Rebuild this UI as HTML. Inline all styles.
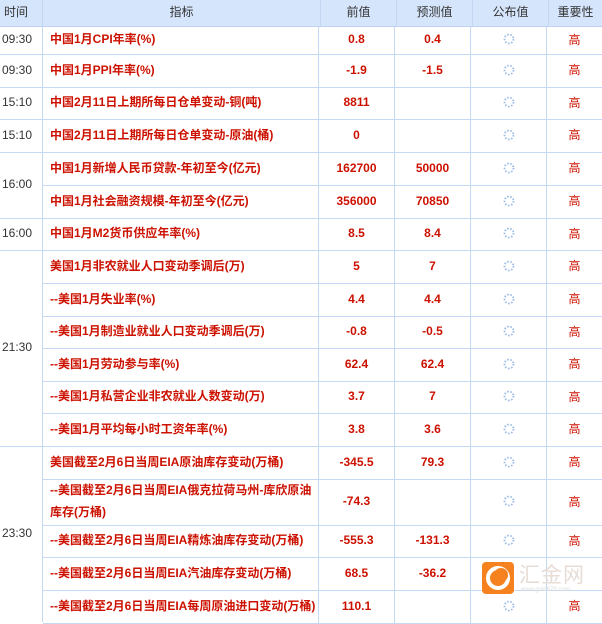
<!DOCTYPE html>
<html><head><meta charset="utf-8">
<style>
*{margin:0;padding:0;box-sizing:border-box}
body{width:602px;height:617px;overflow:hidden;background:#fff;position:relative;font-family:"Liberation Sans","Noto Sans CJK SC",sans-serif;font-size:12px}
.hd{position:absolute;top:0;left:0;width:602px;height:27px;background:#d5e5fb;border-bottom:1px solid #bcd2f0}
.hd div{position:absolute;top:0;height:27px;line-height:25px;text-align:center;color:#333;font-size:12px;border-right:1px solid #c2d6f2}
.r{position:absolute;left:43px;width:559px;border-bottom:1px solid #c5d8f4}
.r div{position:absolute;top:0;height:100%;display:flex;align-items:center;justify-content:center;color:#cc1100;font-weight:bold;border-right:1px solid #c5d8f4;padding-bottom:3px}
.r .n{left:0;width:276px;justify-content:flex-start;padding-left:7px;line-height:22px}
.r .a{left:276px;width:76px}
.r .b{left:352px;width:76px}
.r .c{left:428px;width:76px}
.r .d{left:504px;width:55px;font-weight:normal;border-right:none}
.t{position:absolute;left:0;width:43px;border-bottom:1px solid #c5d8f4;border-right:1px solid #c5d8f4;display:flex;align-items:center;padding-left:2px;color:#333;font-size:12px;padding-bottom:3px}
.sp{width:12px;height:12px}
</style></head><body>
<div class="hd">
<div style="left:0;width:43px;text-align:left;padding-left:4px">时间</div>
<div style="left:43px;width:278px">指标</div>
<div style="left:321px;width:76px">前值</div>
<div style="left:397px;width:76px">预测值</div>
<div style="left:473px;width:76px">公布值</div>
<div style="left:549px;width:53px;border-right:none">重要性</div>
</div>

<div class="t" style="top:27px;height:28px">09:30</div>
<div class="t" style="top:55px;height:33px">09:30</div>
<div class="t" style="top:88px;height:32px">15:10</div>
<div class="t" style="top:120px;height:33px">15:10</div>
<div class="t" style="top:153px;height:66px">16:00</div>
<div class="t" style="top:219px;height:32px">16:00</div>
<div class="t" style="top:251px;height:196px">21:30</div>
<div class="t" style="top:447px;height:175px;border-bottom:none">23:30</div>

<svg width="0" height="0" style="position:absolute"><defs><symbol id="ld" viewBox="0 0 12 12"><circle cx="6" cy="6" r="4.5" fill="none" stroke="#9dbde8" stroke-width="1.8" stroke-dasharray="1.6 1.6"/></symbol></defs></svg>

<div class="r" style="top:27px;height:28px"><div class="n">中国1月CPI年率(%)</div><div class="a">0.8</div><div class="b">0.4</div><div class="c"><svg class="sp"><use href="#ld"/></svg></div><div class="d">高</div></div>
<div class="r" style="top:55px;height:33px"><div class="n">中国1月PPI年率(%)</div><div class="a">-1.9</div><div class="b">-1.5</div><div class="c"><svg class="sp"><use href="#ld"/></svg></div><div class="d">高</div></div>
<div class="r" style="top:88px;height:32px"><div class="n">中国2月11日上期所每日仓单变动-铜(吨)</div><div class="a">8811</div><div class="b"></div><div class="c"><svg class="sp"><use href="#ld"/></svg></div><div class="d">高</div></div>
<div class="r" style="top:120px;height:33px"><div class="n">中国2月11日上期所每日仓单变动-原油(桶)</div><div class="a">0</div><div class="b"></div><div class="c"><svg class="sp"><use href="#ld"/></svg></div><div class="d">高</div></div>
<div class="r" style="top:153px;height:33px"><div class="n">中国1月新增人民币贷款-年初至今(亿元)</div><div class="a">162700</div><div class="b">50000</div><div class="c"><svg class="sp"><use href="#ld"/></svg></div><div class="d">高</div></div>
<div class="r" style="top:186px;height:33px"><div class="n">中国1月社会融资规模-年初至今(亿元)</div><div class="a">356000</div><div class="b">70850</div><div class="c"><svg class="sp"><use href="#ld"/></svg></div><div class="d">高</div></div>
<div class="r" style="top:219px;height:32px"><div class="n">中国1月M2货币供应年率(%)</div><div class="a">8.5</div><div class="b">8.4</div><div class="c"><svg class="sp"><use href="#ld"/></svg></div><div class="d">高</div></div>
<div class="r" style="top:251px;height:33px"><div class="n">美国1月非农就业人口变动季调后(万)</div><div class="a">5</div><div class="b">7</div><div class="c"><svg class="sp"><use href="#ld"/></svg></div><div class="d">高</div></div>
<div class="r" style="top:284px;height:33px"><div class="n">--美国1月失业率(%)</div><div class="a">4.4</div><div class="b">4.4</div><div class="c"><svg class="sp"><use href="#ld"/></svg></div><div class="d">高</div></div>
<div class="r" style="top:317px;height:32px"><div class="n">--美国1月制造业就业人口变动季调后(万)</div><div class="a">-0.8</div><div class="b">-0.5</div><div class="c"><svg class="sp"><use href="#ld"/></svg></div><div class="d">高</div></div>
<div class="r" style="top:349px;height:33px"><div class="n">--美国1月劳动参与率(%)</div><div class="a">62.4</div><div class="b">62.4</div><div class="c"><svg class="sp"><use href="#ld"/></svg></div><div class="d">高</div></div>
<div class="r" style="top:382px;height:32px"><div class="n">--美国1月私营企业非农就业人数变动(万)</div><div class="a">3.7</div><div class="b">7</div><div class="c"><svg class="sp"><use href="#ld"/></svg></div><div class="d">高</div></div>
<div class="r" style="top:414px;height:33px"><div class="n">--美国1月平均每小时工资年率(%)</div><div class="a">3.8</div><div class="b">3.6</div><div class="c"><svg class="sp"><use href="#ld"/></svg></div><div class="d">高</div></div>
<div class="r" style="top:447px;height:33px"><div class="n">美国截至2月6日当周EIA原油库存变动(万桶)</div><div class="a">-345.5</div><div class="b">79.3</div><div class="c"><svg class="sp"><use href="#ld"/></svg></div><div class="d">高</div></div>
<div class="r" style="top:480px;height:46px"><div class="n">--美国截至2月6日当周EIA俄克拉荷马州-库欣原油库存(万桶)</div><div class="a">-74.3</div><div class="b"></div><div class="c"><svg class="sp"><use href="#ld"/></svg></div><div class="d">高</div></div>
<div class="r" style="top:526px;height:32px"><div class="n">--美国截至2月6日当周EIA精炼油库存变动(万桶)</div><div class="a">-555.3</div><div class="b">-131.3</div><div class="c"><svg class="sp"><use href="#ld"/></svg></div><div class="d">高</div></div>
<div class="r" style="top:558px;height:33px"><div class="n">--美国截至2月6日当周EIA汽油库存变动(万桶)</div><div class="a">68.5</div><div class="b">-36.2</div><div class="c"></div><div class="d"></div></div>
<div class="r" style="top:591px;height:33px"><div class="n">--美国截至2月6日当周EIA每周原油进口变动(万桶)</div><div class="a">110.1</div><div class="b"></div><div class="c"><svg class="sp"><use href="#ld"/></svg></div><div class="d">高</div></div>

<div style="position:absolute;left:482px;top:562px;width:32px;height:32px;background:#f5821f;border-radius:4px;overflow:hidden">
<svg width="32" height="32" viewBox="0 0 32 32"><circle cx="16" cy="16" r="10" fill="none" stroke="#fff" stroke-width="4"/><circle cx="19" cy="13" r="7" fill="#f5821f"/></svg>
</div>
<div style="position:absolute;left:519px;top:562px;font-size:21px;color:#e8dcd6;letter-spacing:1px;font-family:'Noto Sans CJK SC',sans-serif;line-height:24px">汇金网</div>
<div style="position:absolute;left:521px;top:587px;font-size:6px;color:#ddd;line-height:7px">www.gold678.com</div>
</body></html>
